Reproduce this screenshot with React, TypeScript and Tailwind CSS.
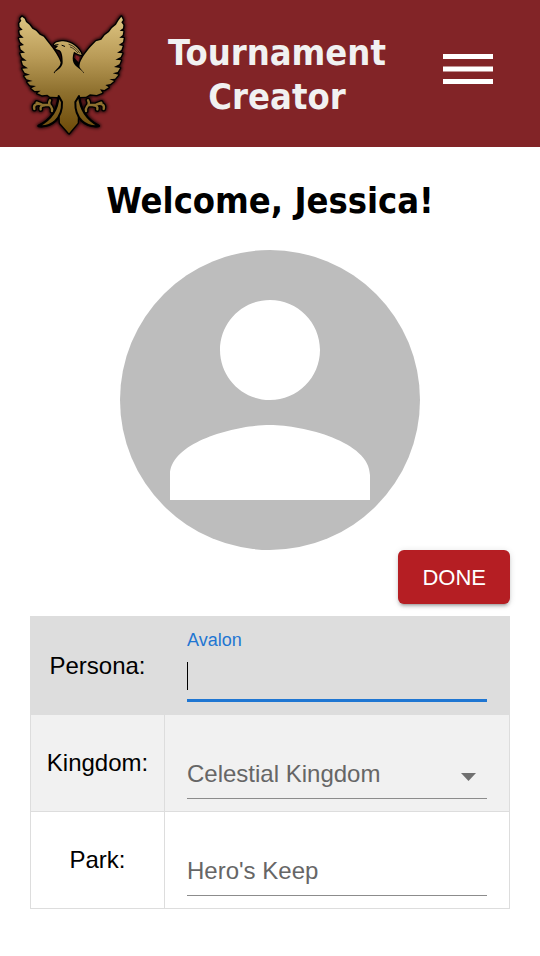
import { useState } from "react";

const headingFont = "font-['DejaVu_Sans_Condensed','DejaVu_Sans',sans-serif] font-bold text-4xl/[44px]";

const wing =
  "M66 50 L61 56 L64 62 L58 70 L59 80 L68 89 L58 92 L60 103 L71 113 L57 114 L61 126 L72 135 L60 138 L62 148 L75 158 L61 160 L66 172 L80 182 L65 182 L69 195 L84 205 L67 206 L74 218 L90 224 L73 228 L80 238 L98 243 L82 246 L90 256 L108 258 L94 265 L104 273 L122 272 L112 280 L126 286 L142 284 L150 290 L207 292 L207 220 L180 206 L182 188 C178 172 158 144 148 132 L131 110 L119 104 L108 92 L97 86 L88 74 L78 66 L74 56 Z";
const rightWing =
  "M364 50 L369 60 L364 67 L370 75 L369 85 L359 92 L370 94 L368 105 L358 113 L371 114 L369 126 L356 135 L368 138 L364 150 L351 158 L367 160 L362 171 L346 179 L363 181 L358 193 L342 201 L360 204 L353 216 L338 220 L355 224 L345 236 L328 238 L342 243 L331 252 L316 255 L326 262 L313 270 L300 268 L307 278 L290 285 L270 283 L258 290 L207 292 L207 220 L236 206 L240 188 C246 172 260 154 272 140 L288 124 L304 119 L314 106 L327 96 L336 84 L348 74 L355 62 Z";
const body =
  "M162 134 C168 125 178 125 190 124 C216 126 238 144 245 165 C235 163 229 159 222 155 C217 168 217 180 221 189 C228 202 240 206 249 216 L262 282 L235 292 L233 369 L207 400 L180 369 L176 292 L150 286 L165 216 C180 206 188 198 188 186 C188 172 186 156 179 151 L166 146 L174 139 Z";
const leftTail = "M176 288 C174 326 156 358 116 378 C153 382 188 357 186 306 Z";
const rightTail = "M237 288 C240 326 258 358 296 378 C258 382 224 357 226 306 Z";
const claw =
  "M150 301 C145 309 148 315 153 320 C156 324 157 328 156 333 M148 315 L126 314 C110 308 99 314 103 327 M134 316 C124 316 120 321 122 328 M124 313 L110 308";
const mirror = "matrix(-1 0 0 1 414 0)";

function Silhouette({ grow }: { grow: number }) {
  return (
    <g fill="#000" stroke="#000" strokeWidth={grow} strokeLinejoin="round">
      <path d={wing} />
      <path d={rightWing} />
      <path d={body} />
      <path d={leftTail} />
      <path d={rightTail} />
      <g fill="none" strokeWidth={grow + 7} strokeLinecap="round">
        <path d={claw} />
        <path d={claw} transform={mirror} />
      </g>
    </g>
  );
}

function PhoenixLogo() {
  return (
    <svg viewBox="0 0 441 441" className="size-[147px] shrink-0" role="img" aria-label="Phoenix emblem">
      <defs>
        <linearGradient id="gold" gradientUnits="userSpaceOnUse" x1="0" y1="48" x2="0" y2="400">
          <stop offset="0" stopColor="#dec582" />
          <stop offset="0.35" stopColor="#b99b57" />
          <stop offset="0.65" stopColor="#8e702e" />
          <stop offset="1" stopColor="#6d4a08" />
        </linearGradient>
        <filter id="glow" x="-10%" y="-10%" width="120%" height="120%">
          <feGaussianBlur stdDeviation="5" />
        </filter>
      </defs>
      <g filter="url(#glow)" opacity="0.75">
        <Silhouette grow={14} />
      </g>
      <Silhouette grow={8} />
      <g fill="url(#gold)">
        <path d={wing} />
        <path d={rightWing} />
      </g>
      <path d="M182 190 C180 200 170 206 161 218 L200 240 L252 218 C242 206 236 202 238 190 L210 160 Z" fill="#000" />
      <path d="M163 221 L207 200 L249 221 L249 262 L163 262 Z" fill="url(#gold)" />
      <path d={body} fill="url(#gold)" />
      <path d="M227 166 L238 171 L235 184 C230 180 227 174 227 166 Z" fill="#7d2125" />
      <g fill="none" stroke="#000" strokeLinecap="round">
        <path strokeWidth="2" d="M207 133 C221 137 232 148 239 159 M211 141 C222 145 228 152 233 158" />
        <path strokeWidth="3" d="M186 136 L194 139 M166 135 L174 134" />
      </g>
      <g fill="none" stroke="#8e702e" strokeWidth="7" strokeLinecap="round" strokeLinejoin="round">
        <path d={claw} />
        <path d={claw} transform={mirror} />
      </g>
      <g fill="url(#gold)" stroke="#000" strokeWidth="6" strokeLinejoin="round">
        <path d={leftTail} />
        <path d={rightTail} />
      </g>
    </svg>
  );
}

function Header() {
  return (
    <header className="flex items-center bg-[#822427]">
      <PhoenixLogo />
      <h1 className={`flex-1 pt-0.5 text-center text-[#f1f1f1] ${headingFont}`}>
        Tournament
        <br />
        Creator
      </h1>
      <button type="button" aria-label="Open menu" className="shrink-0 pr-[47px] pb-2.5 pl-9">
        <svg viewBox="0 0 50 30" className="h-[30px] w-[50px] fill-white">
          <rect width="50" height="5" />
          <rect y="12.5" width="50" height="5" />
          <rect y="25" width="50" height="5" />
        </svg>
      </button>
    </header>
  );
}

const labelCell = "border border-[#dddddd] text-center font-normal";
const fieldCell = "border border-[#dddddd] px-[22px] py-3";
const field = "block h-12 w-full border-b border-[#8c8c8c] bg-transparent p-0 pb-0.5 text-2xl text-[#666666] outline-none placeholder:text-[#666666]";

export default function App() {
  const [persona, setPersona] = useState("");
  return (
    <div className="min-h-screen bg-white font-['Liberation_Sans',Arial,sans-serif] text-black">
      <Header />
      <main className="px-[30px] pb-10">
        <h2 className={`pt-8 text-center ${headingFont}`}>Welcome, Jessica!</h2>
        <div className="mx-auto mt-[27px] size-[300px] overflow-hidden rounded-full bg-[#bdbdbd]">
          <svg viewBox="0 0 24 24" className="size-full fill-white" role="img" aria-label="Profile picture">
            <path d="M12 12c2.21 0 4-1.79 4-4s-1.79-4-4-4-4 1.79-4 4 1.79 4 4 4zm0 2c-2.67 0-8 1.34-8 4v2h16v-2c0-2.66-5.33-4-8-4z" />
          </svg>
        </div>
        <form onSubmit={(e) => e.preventDefault()}>
          <div className="flex justify-end">
            <button
              type="submit"
              className="h-[54px] rounded-md bg-[#b51e23] px-6 text-[22px] text-white shadow-[0_4px_2px_-3px_rgba(0,0,0,0.2),0_3px_3px_rgba(0,0,0,0.14),0_1px_7px_rgba(0,0,0,0.12)]"
            >
              DONE
            </button>
          </div>
          <table className="mt-3 w-full border-collapse text-2xl">
            <tbody>
              <tr className="h-[98px] bg-[#dddddd]">
                <th scope="row" className={`w-[134px] ${labelCell}`}>Persona:</th>
                <td className={fieldCell}>
                  <label htmlFor="persona" className="block h-6 text-lg/5 text-[#1f76d2]">Avalon</label>
                  <div className="relative">
                    <input
                      id="persona"
                      value={persona}
                      onChange={(e) => setPersona(e.target.value)}
                      className="block h-12 w-full border-b-3 border-[#1f76d2] bg-transparent p-0 text-2xl outline-none"
                    />
                    {persona === "" && <span aria-hidden="true" className="absolute top-2 left-0 h-7 w-px bg-black" />}
                  </div>
                </td>
              </tr>
              <tr className="bg-[#f1f1f1]">
                <th scope="row" className={labelCell}>
                  <label htmlFor="kingdom">Kingdom:</label>
                </th>
                <td className={fieldCell}>
                  <div className="relative pt-6">
                    <select id="kingdom" className={`appearance-none ${field}`}>
                      <option>Celestial Kingdom</option>
                    </select>
                    <svg viewBox="0 0 15 8" aria-hidden="true" className="pointer-events-none absolute right-[11px] bottom-[18px] h-2 w-[15px] fill-[#707070]">
                      <path d="M0 0h15L7.5 8z" />
                    </svg>
                  </div>
                </td>
              </tr>
              <tr>
                <th scope="row" className={labelCell}>
                  <label htmlFor="park">Park:</label>
                </th>
                <td className={fieldCell}>
                  <div className="pt-6">
                    <input id="park" placeholder="Hero's Keep" className={field} />
                  </div>
                </td>
              </tr>
            </tbody>
          </table>
        </form>
      </main>
    </div>
  );
}
